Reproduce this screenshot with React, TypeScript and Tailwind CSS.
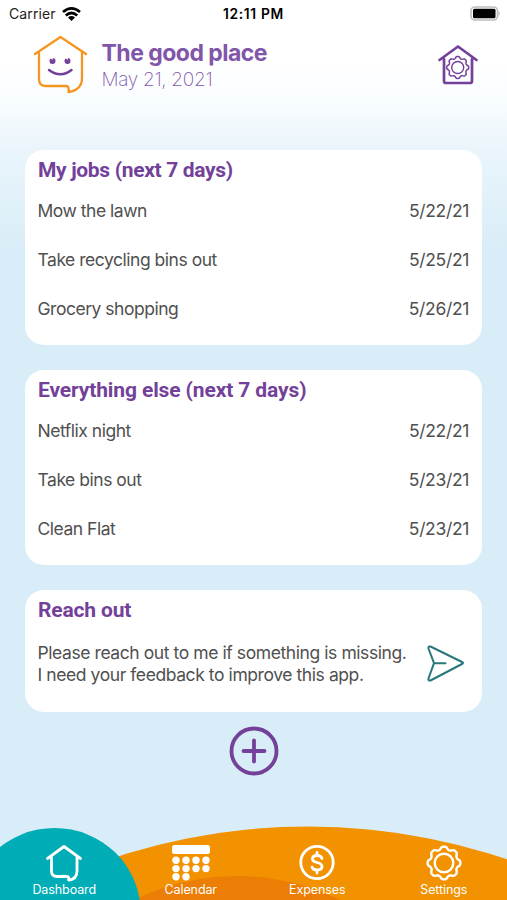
import React from "react";

function gearPath(c: number, r: number, a: number, teeth = 8) {
  const n = teeth * 14;
  let d = "";
  for (let i = 0; i < n; i++) {
    const t = (i / n) * Math.PI * 2 - Math.PI / 2;
    const w = Math.tanh(1.4 * Math.cos(teeth * (t + Math.PI / 2)) + 0.2);
    const rr = r + a * w;
    d += `${i ? "L" : "M"}${(c + rr * Math.cos(t)).toFixed(2)} ${(c + rr * Math.sin(t)).toFixed(2)}`;
  }
  return d + "Z";
}

const myJobs = [
  ["Mow the lawn", "5/22/21"],
  ["Take recycling bins out", "5/25/21"],
  ["Grocery shopping", "5/26/21"],
];
const otherJobs = [
  ["Netflix night", "5/22/21"],
  ["Take bins out", "5/23/21"],
  ["Clean Flat", "5/23/21"],
];

function StatusBar() {
  return (
    <div className="relative flex h-[27px] items-center justify-between pl-[9px] pr-[6px] text-[14px] text-[#222]">
      <div className="flex items-center gap-[6px]">
        <span className="tracking-[0.1px]">Carrier</span>
        <svg width="19" height="14" viewBox="0 0 19 14" fill="none" stroke="#000" strokeWidth="2.700">
          <path d="M1 5Q9.500 -2.200 18 5M3.800 8.500Q9.500 3.500 15.200 8.500" />
          <path d="M6 10.500Q9.500 7.600 13 10.500L9.500 14Z" fill="#000" stroke="none" />
        </svg>
      </div>
      <span className="absolute inset-x-0 text-center text-[13.800px] font-semibold leading-[26px] tracking-[0.65px] text-black">12:11 PM</span>
      <svg width="31" height="15" viewBox="0 0 31 15">
        <rect x="1" y="1" width="26.500" height="13" rx="4" fill="#fff" stroke="#bdbdbd" strokeWidth="1.600" />
        <rect x="3" y="2.800" width="22.500" height="9.400" rx="1.500" fill="#000" />
        <path d="M28.500 5Q31 7.500 28.500 10Z" fill="#aaa" />
      </svg>
    </div>
  );
}

function Card({ title, tracking, height, children }: { title: string; tracking: string; height: string; children: React.ReactNode }) {
  return (
    <section className={`rounded-[19px] bg-white px-[13px] ${height}`}>
      <h2 className={`flex h-[37px] items-center pt-[3px] font-[Roboto,sans-serif] text-[21px] font-bold leading-none text-[#734199] ${tracking}`}>{title}</h2>
      {children}
    </section>
  );
}

function Rows({ items }: { items: string[][] }) {
  return (
    <ul>
      {items.map(([name, date]) => (
        <li key={name} className="flex h-[49px] items-center justify-between text-[17.500px] text-[#505050]">
          <span className="ml-[-0.5px] tracking-[-0.48px]">{name}</span>
          <span className="tracking-[-0.34px]">{date}</span>
        </li>
      ))}
    </ul>
  );
}

function Tab({ label, children }: { label: string; children: React.ReactNode }) {
  return (
    <div className="flex flex-1 flex-col items-center">
      <svg width="40" height="40" viewBox="0 0 40 40" fill="none" stroke="#fff" strokeWidth="2.800" strokeLinecap="round" strokeLinejoin="round">
        {children}
      </svg>
      <span className="mt-[-1px] text-[12.500px] leading-[15px] tracking-[-0.1px] text-white">{label}</span>
    </div>
  );
}

export default function App() {
  return (
    <div className="flex h-[900px] w-[507px] flex-col overflow-hidden bg-[linear-gradient(#fff_0px,#fff_60px,#fafdff_95px,#eaf5fb_150px,#d9edf8_245px)] font-[Inter,sans-serif]">
      <StatusBar />
      <header className="flex h-[123px] items-start pl-[33px] pr-[28px]">
        <svg className="mt-[7px]" width="56" height="62" viewBox="0 0 56 62" fill="none" strokeLinecap="round" strokeLinejoin="round">
          <path d="M6 18V45Q6 52 13 52H33Q36.500 52 35.500 58Q49 56 49 44V18M2 20L27.500 3L53 20" stroke="#f4961f" strokeWidth="2.300" />
          <path d="M16 36Q27.500 44.500 38.500 36" stroke="#734199" strokeWidth="2.500" />
          <circle cx="19.500" cy="27" r="3" fill="#734199" />
          <circle cx="34.500" cy="27" r="3" fill="#734199" />
          <path d="M17 23.500L19.500 25M32 23.500L34.500 25" stroke="#fff" strokeWidth="1.300" />
        </svg>
        <div className="ml-[12.500px] mt-[12px] flex-1">
          <h1 className="text-[23px] font-bold leading-[28px] tracking-[-0.52px] text-[#8055aa]">The good place</h1>
          <p className="text-[19px] font-extralight leading-[25px] tracking-[-0.3px] text-[#8055aa]">May 21, 2021</p>
        </div>
        <svg className="mt-[15px]" width="42" height="44" viewBox="0 0 42 44" fill="none" stroke="#734199" strokeLinecap="round" strokeLinejoin="round">
          <path d="M2.500 18L21 4.500L39.500 18M7 17V39Q7 41 9 41H33Q35 41 35 39V17" strokeWidth="2.700" />
          <g transform="translate(-0.3 4.500)">
            <path d={gearPath(21, 10, 1.1)} strokeWidth="1.500" />
            <circle cx="21" cy="21" r="6" strokeWidth="1.400" />
          </g>
        </svg>
      </header>

      <main className="flex flex-col gap-[25px] px-[25px]">
        <Card title="My jobs (next 7 days)" tracking="tracking-[-0.33px]" height="h-[195px]">
          <Rows items={myJobs} />
        </Card>
        <Card title="Everything else (next 7 days)" tracking="tracking-[-0.12px]" height="h-[195px]">
          <Rows items={otherJobs} />
        </Card>
        <Card title="Reach out" tracking="tracking-[-0.15px]" height="h-[122px]">
          <div className="flex items-start justify-between pt-[15px]">
            <p className="ml-[-0.5px] whitespace-nowrap text-[17.500px] leading-[22px] tracking-[-0.42px] text-[#505050]">
              Please reach out to me if something is missing.
              <br />I need your feedback to improve this app.
            </p>
            <svg className="mr-[4px] mt-[2px] shrink-0" width="40" height="40" viewBox="0 0 40 40" fill="none" stroke="#28777b" strokeWidth="2" strokeLinecap="round" strokeLinejoin="round">
              <path d="M5.500 2.500L37 18Q39 19 37 20L5.500 36.500Q3 37 3.500 34.500L9 19.200L3.500 4.500Q3 2 5.500 2.500ZM9 19.200H20.500" />
            </svg>
          </div>
        </Card>
      </main>

      <div className="mt-[14px] flex justify-center">
        <svg width="50" height="50" viewBox="0 0 50 50" fill="none" stroke="#734199" strokeWidth="3.800" strokeLinecap="round">
          <circle cx="25" cy="25" r="22.500" />
          <path d="M25 14.500V35.500M14.500 25H35.500" />
        </svg>
      </div>

      <nav className="relative mt-auto h-[76px]">
        <svg className="absolute inset-0" width="507" height="76" viewBox="0 824 507 76">
          <circle cx="308" cy="1447" r="620.500" fill="#f39200" />
          <ellipse cx="237" cy="1026" rx="190" ry="150" fill="#ec7d05" />
          <ellipse cx="54.500" cy="912" rx="86" ry="84" fill="#00acb6" />
        </svg>
        <div className="relative flex h-full pl-[1px] pt-[19px]">
          <Tab label="Dashboard">
            <path d="M3.500 15.500L20 3.500L36.500 15.500M7.500 14.500V28Q7.500 33.500 13 33.500H23Q25.500 33.500 24.500 37Q33 36.500 33 28V14.500" />
          </Tab>
          <Tab label="Calendar">
            <g fill="#fff" stroke="none">
              <rect x="1" y="2" width="38" height="9" rx="2.500" />
              {[5, 15, 25, 35].map((x) =>
                [17.3, 25.6, 33.7].filter((y) => y < 30 || x < 20).map((y) => <circle key={`${x}-${y}`} cx={x} cy={y} r="3.700" />),
              )}
            </g>
          </Tab>
          <Tab label="Expenses">
            <circle cx="20" cy="19.500" r="16.200" />
            <path d="M25 15.500Q24 12.500 20 12.500Q15.500 12.500 15.500 16Q15.500 18.500 20 19.500Q25 20.500 25 23.500Q25 27 20 27Q16 27 15 24M20 9.500V12.500M20 27V30" />
          </Tab>
          <Tab label="Settings">
            <path d={gearPath(20, 15, 1.5)} strokeWidth="2.400" />
            <circle cx="20" cy="20" r="9.300" strokeWidth="2.400" />
          </Tab>
        </div>
      </nav>
    </div>
  );
}
